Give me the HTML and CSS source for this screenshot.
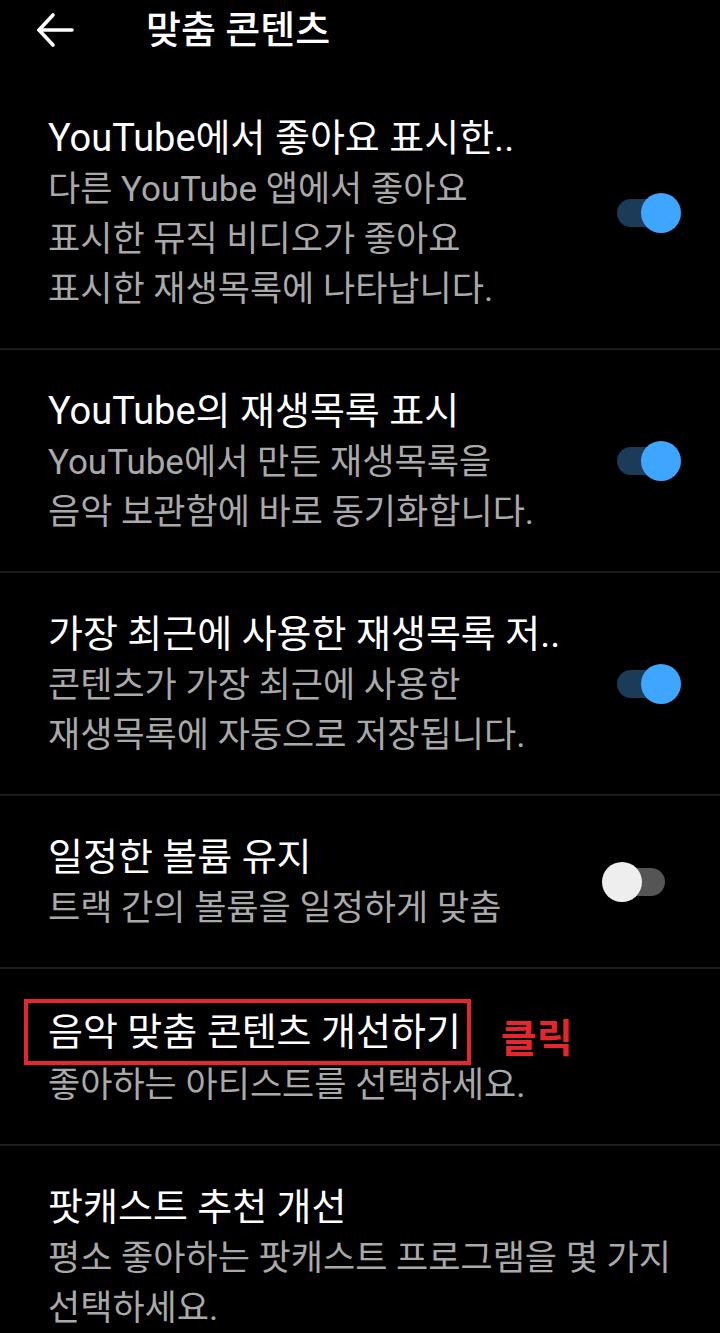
FILE: index.html
```
<!DOCTYPE html>
<html lang="ko">
<head>
  <meta charset="UTF-8">
  <meta name="viewport" content="width=device-width, initial-scale=1.0">
  <title>맞춤 콘텐츠</title>
  <link rel="stylesheet" href="styles.css">
</head>
<body>
  <div class="page">
    <div class="top_bar">
      <a class="back_btn" href="javascript:;">
        <svg width="40" height="40" viewBox="0 0 40 40" fill="none" stroke="#fff" stroke-width="3.6" stroke-linecap="round" stroke-linejoin="round">
          <path d="M37 20H4"/>
          <path d="M18 5L4 20l14 15"/>
        </svg>
      </a>
      <h1 class="top_title">맞춤 콘텐츠</h1>
    </div>
    <ul class="setting_list">
      <li class="setting_item">
        <div class="item_text">
          <div class="item_title">YouTube에서 좋아요 표시한..</div>
          <div class="item_desc">다른 YouTube 앱에서 좋아요<br>표시한 뮤직 비디오가 좋아요<br>표시한 재생목록에 나타납니다.</div>
        </div>
        <span class="switch switch_on"><i class="switch_track"></i><i class="switch_thumb"></i></span>
      </li>
      <li class="setting_item">
        <div class="item_text">
          <div class="item_title">YouTube의 재생목록 표시</div>
          <div class="item_desc">YouTube에서 만든 재생목록을<br>음악 보관함에 바로 동기화합니다.</div>
        </div>
        <span class="switch switch_on"><i class="switch_track"></i><i class="switch_thumb"></i></span>
      </li>
      <li class="setting_item">
        <div class="item_text">
          <div class="item_title">가장 최근에 사용한 재생목록 저..</div>
          <div class="item_desc">콘텐츠가 가장 최근에 사용한<br>재생목록에 자동으로 저장됩니다.</div>
        </div>
        <span class="switch switch_on"><i class="switch_track"></i><i class="switch_thumb"></i></span>
      </li>
      <li class="setting_item">
        <div class="item_text">
          <div class="item_title">일정한 볼륨 유지</div>
          <div class="item_desc">트랙 간의 볼륨을 일정하게 맞춤</div>
        </div>
        <span class="switch"><i class="switch_track"></i><i class="switch_thumb"></i></span>
      </li>
      <li class="setting_item">
        <div class="item_text">
          <div class="item_title"><span class="mark_box">음악 맞춤 콘텐츠 개선하기</span><span class="mark_label">클릭</span></div>
          <div class="item_desc">좋아하는 아티스트를 선택하세요.</div>
        </div>
      </li>
      <li class="setting_item">
        <div class="item_text">
          <div class="item_title">팟캐스트 추천 개선</div>
          <div class="item_desc">평소 좋아하는 팟캐스트 프로그램을 몇 가지<br>선택하세요.</div>
        </div>
      </li>
    </ul>
  </div>
</body>
</html>
```

FILE: styles.css
```
html, body {
  margin: 0;
  padding: 0;
  background-color: #000;
}
.page {
  width: 720px;
  min-height: 1333px;
  overflow: hidden;
  color: #fff;
  font-family: Roboto, "Noto Sans CJK KR", sans-serif;
}
.top_bar {
  display: flex;
  align-items: center;
  height: 60px;
}
.back_btn {
  display: flex;
  margin-left: 35px;
}
.top_title {
  margin: 0 0 0 71px;
  font-size: 38px;
  font-weight: 500;
  line-height: 60px;
}
.setting_list {
  margin: 17px 0 0;
  padding: 0;
  list-style: none;
}
.setting_item {
  display: flex;
  align-items: center;
  padding: 34px 39px 33px 48px;
  border-bottom: 2px solid #1c1c1c;
}
.setting_item:last-child {
  border-bottom: none;
}
.item_text {
  flex: 1;
}
.item_title {
  display: flex;
  align-items: center;
  font-size: 38px;
  line-height: 54px;
  white-space: nowrap;
}
.item_desc {
  font-size: 35px;
  line-height: 50px;
  color: #a9a9a9;
  white-space: nowrap;
}
.mark_box {
  margin: -12px 0 -12px -24px;
  padding: 4px 6px 4px 20px;
  border: 4px solid #e4262d;
  line-height: 50px;
}
.mark_label {
  margin-left: 30px;
  padding-top: 14px;
  line-height: 44px;
  color: #e4262d;
  font-weight: 700;
  font-size: 39px;
}
.switch {
  position: relative;
  width: 79px;
  height: 40px;
  flex-shrink: 0;
}
.switch_track {
  position: absolute;
  left: 15px;
  top: 6px;
  width: 48px;
  height: 28px;
  border-radius: 14px;
  background-color: #555;
}
.switch_thumb {
  position: absolute;
  left: 0;
  top: 0;
  width: 40px;
  height: 40px;
  border-radius: 50%;
  background-color: #eee;
}
.switch_on .switch_track {
  background-color: #1c3b58;
}
.switch_on .switch_thumb {
  left: 39px;
  background-color: #3ea6ff;
}
```
